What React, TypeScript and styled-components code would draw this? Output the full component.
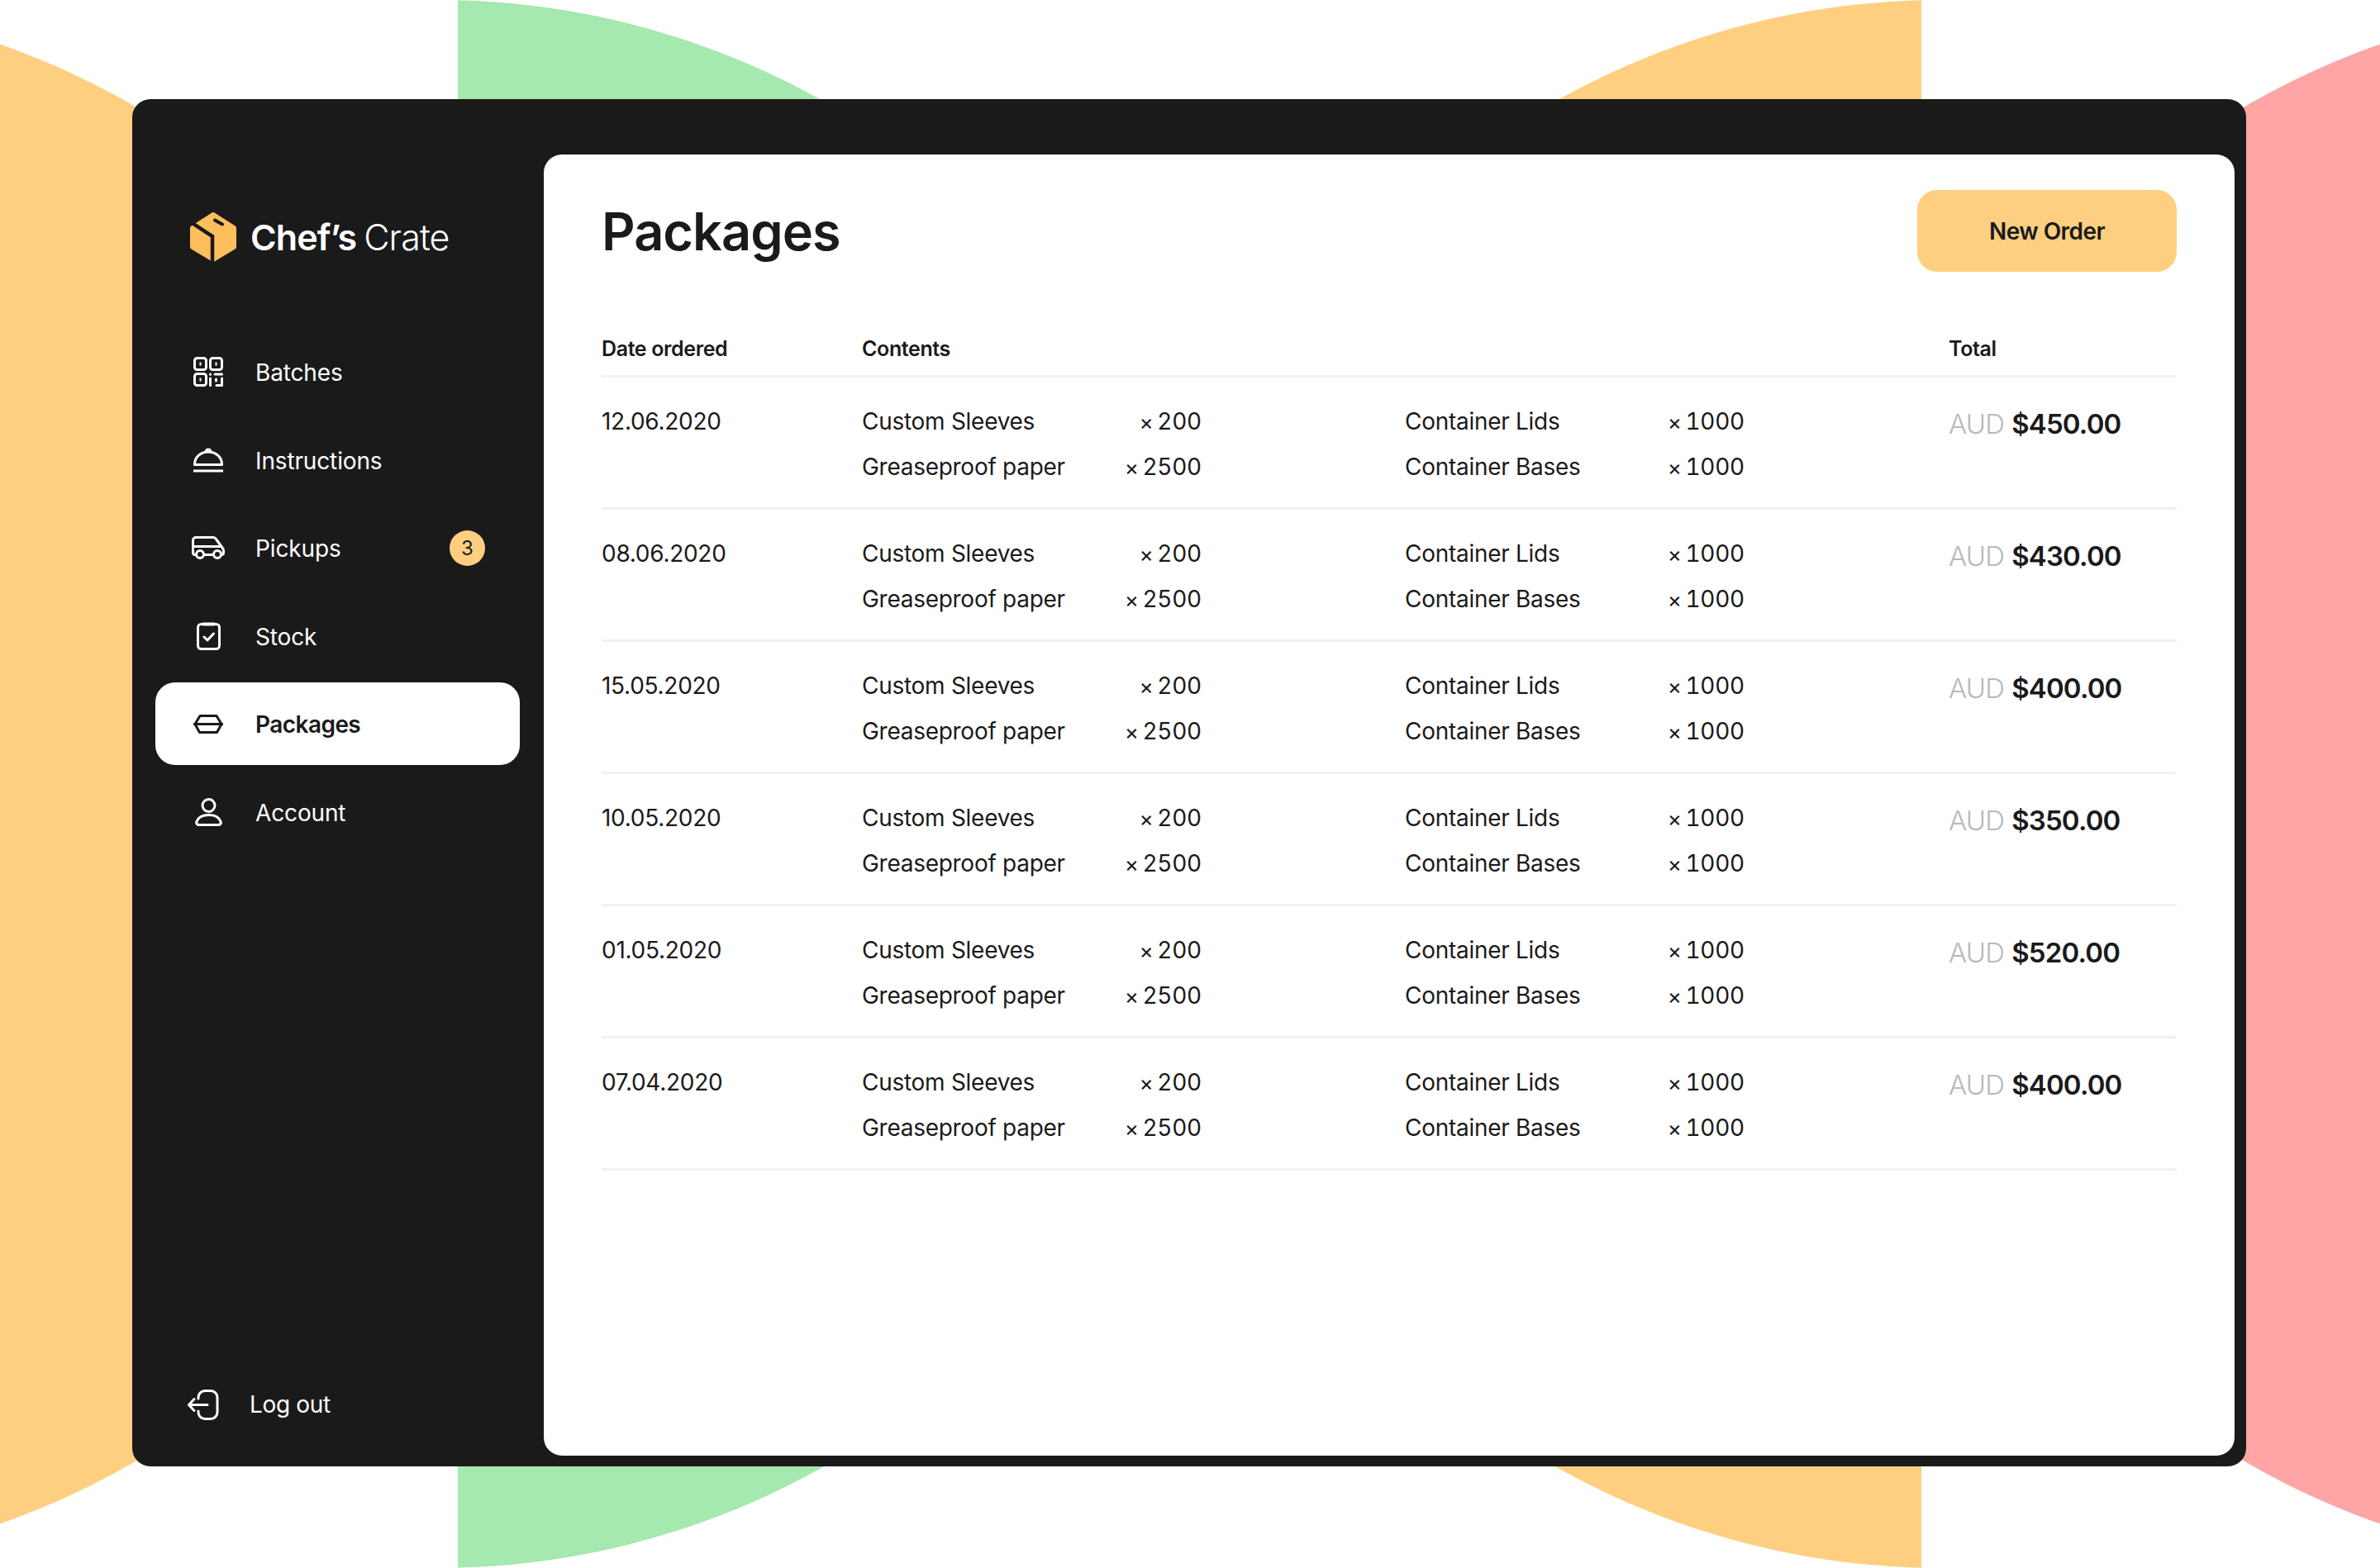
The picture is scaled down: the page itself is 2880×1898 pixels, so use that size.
import styled, { createGlobalStyle } from "styled-components";

const GlobalStyle = createGlobalStyle`
  html, body {
    margin: 0;
    background: #fff;
    font-family: Inter, "Liberation Sans", sans-serif;
    color: #1a1a1a;
  }
  * { box-sizing: border-box; }
`;

const Page = styled.div`
  position: relative;
  width: 2880px;
  height: 1898px;
  overflow: hidden;
  padding: 120px 162px 123px 160px;
`;

const Backdrop = styled.svg`
  position: absolute;
  inset: 0;
`;

const Frame = styled.div`
  position: relative;
  display: flex;
  height: 100%;
  background: #1a1a1a;
  border-radius: 22px;
`;

const Sidebar = styled.aside`
  display: flex;
  flex-direction: column;
  width: 498px;
  flex: none;
  padding: 137px 29px 25px 28px;
`;

const Brand = styled.div`
  display: flex;
  align-items: center;
  gap: 17px;
  height: 60px;
  padding-left: 42px;
  margin-bottom: 83px;
  color: #fff;
  font-size: 43px;
  letter-spacing: -0.02em;
`;

const BrandName = styled.div`
  display: flex;
  gap: 9px;
`;

const BrandBold = styled.span`
  font-weight: 600;
`;

const BrandLight = styled.span`
  font-weight: 300;
`;

const Nav = styled.nav`
  display: flex;
  flex-direction: column;
  gap: 6.6px;
`;

const NavItem = styled.a<{ $active?: boolean }>`
  display: flex;
  align-items: center;
  height: 100px;
  padding: 0 0 0 42px;
  border-radius: 24px;
  font-size: 28px;
  letter-spacing: ${(p) => (p.$active ? "-0.02em" : "-0.005em")};
  font-weight: ${(p) => (p.$active ? 600 : 400)};
  color: ${(p) => (p.$active ? "#1a1a1a" : "#fff")};
  background: ${(p) => (p.$active ? "#fff" : "transparent")};
`;

const NavIcon = styled.span`
  display: flex;
  align-items: center;
  justify-content: center;
  flex: none;
  width: 44px;
  margin-right: 35px;
`;

const NavLabel = styled.span`
  position: relative;
  top: 1px;
`;

const Badge = styled.span`
  display: flex;
  align-items: center;
  justify-content: center;
  width: 43px;
  height: 43px;
  margin-left: auto;
  margin-right: 42px;
  border-radius: 50%;
  background: #ffcf81;
  color: #1a1a1a;
  font-size: 24px;
  letter-spacing: 0;
`;

const LogOut = styled.a`
  display: flex;
  align-items: center;
  gap: 37px;
  height: 100px;
  margin-top: auto;
  padding-left: 39px;
  color: #fff;
  font-size: 28px;
  letter-spacing: -0.012em;
`;

const Panel = styled.main`
  flex: 1;
  margin: 67px 14px 13px 0;
  padding: 43px 70px 0;
  background: #fff;
  border-radius: 22px;
`;

const TitleRow = styled.div`
  display: flex;
  align-items: center;
  justify-content: space-between;
  height: 99px;
`;

const Title = styled.h1`
  margin: 0;
  font-size: 63px;
  font-weight: 600;
  letter-spacing: -0.015em;
`;

const NewOrder = styled.button`
  width: 314px;
  height: 99px;
  border: 0;
  border-radius: 24px;
  background: #ffcf81;
  color: #1a1a1a;
  font-family: inherit;
  font-size: 28px;
  font-weight: 600;
  letter-spacing: -0.02em;
`;

const TableHead = styled.div`
  display: grid;
  grid-template-columns: 315px 657px 658px 1fr;
  margin-top: 71px;
  padding-bottom: 10px;
  border-bottom: 3px solid #f1f1f1;
  font-size: 25px;
  line-height: 44px;
  font-weight: 600;
  letter-spacing: -0.015em;
`;

const HeadWide = styled.span`
  grid-column: span 2;
`;

const Row = styled.div`
  display: grid;
  grid-template-columns: 315px 657px 658px 1fr;
  height: 160px;
  padding-top: 26px;
  border-bottom: 3px solid #f1f1f1;
  font-size: 28px;
  line-height: 55px;
  letter-spacing: -0.01em;
`;

const ItemColumn = styled.div`
  width: 411px;
`;

const ItemLine = styled.div`
  display: flex;
  justify-content: space-between;
`;

const Qty = styled.span`
  font-variant-numeric: tabular-nums;
`;

const Times = styled.span`
  margin-right: 5px;
  font-size: 26px;
  line-height: 0;
`;

const Total = styled.div`
  margin-top: 3px;
  font-size: 33px;
  font-weight: 600;
  letter-spacing: -0.025em;
`;

const Currency = styled.span`
  margin-right: 9px;
  font-weight: 300;
  color: #b9b9b9;
`;

const stroke = {
  fill: "none",
  stroke: "currentColor",
  strokeWidth: 3,
  strokeLinecap: "round",
  strokeLinejoin: "round",
} as const;

function Logo() {
  return (
    <svg width="56" height="60" viewBox="0 0 56 60">
      <path
        d="M28 3 L53 19 V42 L28 57 L3 42 V19 Z"
        fill="#ffbe5c"
        stroke="#ffbe5c"
        strokeWidth="6"
        strokeLinejoin="round"
      />
      <path d="M1 12 L27 29 V60" fill="none" stroke="#1a1a1a" strokeWidth="4.5" />
      <path d="M30 9.5 L39 14.5" fill="none" stroke="#1a1a1a" strokeWidth="4" strokeLinecap="round" />
    </svg>
  );
}

function BatchesIcon() {
  return (
    <svg width="36" height="36" viewBox="0 0 36 36" {...stroke}>
      <rect x="1.5" y="1.5" width="14" height="14" rx="3" />
      <rect x="20.5" y="1.5" width="14" height="14" rx="3" />
      <rect x="1.5" y="20.5" width="14" height="14" rx="3" />
      <path d="M7.5 8.5h2M26.5 8.5h2M7.5 27.5h2" strokeWidth="4" strokeLinecap="butt" />
      <path d="M20.5 21v.2M20.5 26v8.5M26 21h8.5M34.5 26v8.5H28M27.5 27v2" />
    </svg>
  );
}

function InstructionsIcon() {
  return (
    <svg width="38" height="30" viewBox="0 0 38 30" {...stroke}>
      <path d="M2.5 20.5C2.5 11 10 5 19 5s16.500 6 16.500 15.500Z" />
      <path d="M16 5a3 3 0 0 1 6 0" />
      <path d="M1 28h36" strokeLinecap="butt" />
    </svg>
  );
}

function PickupsIcon() {
  return (
    <svg width="41" height="28" viewBox="0 0 41 28" {...stroke}>
      <path d="M5.500 22.500H4A2.500 2.500 0 0 1 1.500 20V5A3.500 3.500 0 0 1 5 1.500h21c1.500 0 2.600.6 3.400 2l7.600 10.500c1 1.300 1.500 2.200 1.500 3.500V20a2.500 2.500 0 0 1-2.500 2.500h-.5" />
      <path d="M14.500 22.500h12M1.500 12.500H36" />
      <circle cx="10" cy="22" r="4.500" />
      <circle cx="31" cy="22" r="4.500" />
    </svg>
  );
}

function StockIcon() {
  return (
    <svg width="29" height="34" viewBox="0 0 29 34" {...stroke}>
      <rect x="1.500" y="2.500" width="26" height="30" rx="4" />
      <path d="M8 2.500h13" strokeWidth="4" />
      <path d="M9 18l4 4 7.500-8" />
    </svg>
  );
}

function PackagesIcon() {
  return (
    <svg width="36" height="23" viewBox="0 0 36 23" {...stroke}>
      <path d="M1 11.500h34" />
      <path d="M2 11.500 8 1.500h20l6 10-5.500 10h-21Z" />
    </svg>
  );
}

function AccountIcon() {
  return (
    <svg width="33" height="34" viewBox="0 0 33 34" {...stroke}>
      <circle cx="16.500" cy="9" r="7.500" />
      <path d="M5 32.500h23c2.500 0 4-2 3-4-2-5.500-8-8-14.500-8s-12.500 2.500-14.500 8c-1 2 .5 4 3 4Z" />
    </svg>
  );
}

function LogOutIcon() {
  return (
    <svg width="38" height="37" viewBox="0 0 38 37" {...stroke}>
      <path d="M13 11V9.500a8 8 0 0 1 8-8h7a8 8 0 0 1 8 8v18a8 8 0 0 1-8 8h-7a8 8 0 0 1-8-8V26" />
      <path d="M24 18.500H1.500M8 11.500l-6.500 7 6.500 7" />
    </svg>
  );
}

const navItems = [
  { label: "Batches", icon: <BatchesIcon /> },
  { label: "Instructions", icon: <InstructionsIcon /> },
  { label: "Pickups", icon: <PickupsIcon />, badge: 3 },
  { label: "Stock", icon: <StockIcon /> },
  { label: "Packages", icon: <PackagesIcon />, active: true },
  { label: "Account", icon: <AccountIcon /> },
];

const orders = [
  { date: "12.06.2020", total: "$450.00" },
  { date: "08.06.2020", total: "$430.00" },
  { date: "15.05.2020", total: "$400.00" },
  { date: "10.05.2020", total: "$350.00" },
  { date: "01.05.2020", total: "$520.00" },
  { date: "07.04.2020", total: "$400.00" },
];

function Item({ name, qty }: { name: string; qty: number }) {
  return (
    <ItemLine>
      <span>{name}</span>
      <Qty>
        <Times>×</Times>
        {qty}
      </Qty>
    </ItemLine>
  );
}

export default function App() {
  return (
    <>
      <GlobalStyle />
      <Page>
        <Backdrop width="2880" height="1898" viewBox="0 0 2880 1898">
          <circle cx="-314" cy="949" r="949" fill="#ffcf81" />
          <circle cx="3194" cy="949" r="949" fill="#ffa5a6" />
          <path d="M554 0.300A949 949 0 0 1 554 1897.700Z" fill="#a5e8b0" />
          <path d="M2325 0.300A949 949 0 0 0 2325 1897.700Z" fill="#ffcf81" />
        </Backdrop>
        <Frame>
          <Sidebar>
            <Brand>
              <Logo />
              <BrandName>
                <BrandBold>Chef’s</BrandBold>
                <BrandLight>Crate</BrandLight>
              </BrandName>
            </Brand>
            <Nav>
              {navItems.map((item) => (
                <NavItem key={item.label} $active={item.active}>
                  <NavIcon>{item.icon}</NavIcon>
                  <NavLabel>{item.label}</NavLabel>
                  {item.badge && <Badge>{item.badge}</Badge>}
                </NavItem>
              ))}
            </Nav>
            <LogOut>
              <LogOutIcon />
              Log out
            </LogOut>
          </Sidebar>
          <Panel>
            <TitleRow>
              <Title>Packages</Title>
              <NewOrder>New Order</NewOrder>
            </TitleRow>
            <TableHead>
              <span>Date ordered</span>
              <HeadWide>Contents</HeadWide>
              <span>Total</span>
            </TableHead>
            {orders.map((order) => (
              <Row key={order.date}>
                <span>{order.date}</span>
                <ItemColumn>
                  <Item name="Custom Sleeves" qty={200} />
                  <Item name="Greaseproof paper" qty={2500} />
                </ItemColumn>
                <ItemColumn>
                  <Item name="Container Lids" qty={1000} />
                  <Item name="Container Bases" qty={1000} />
                </ItemColumn>
                <Total>
                  <Currency>AUD</Currency>
                  {order.total}
                </Total>
              </Row>
            ))}
          </Panel>
        </Frame>
      </Page>
    </>
  );
}
